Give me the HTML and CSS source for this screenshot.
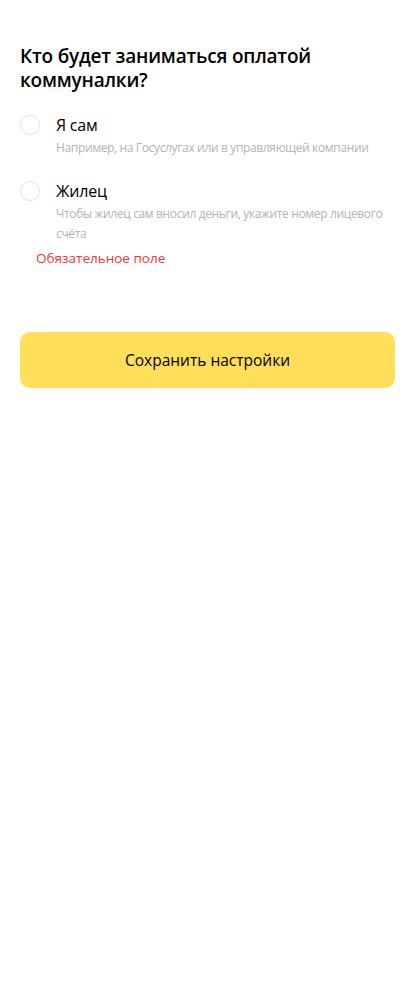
FILE: index.html
```html
<!DOCTYPE html>
<html lang="ru">
<head>
<meta charset="utf-8">
<link rel="stylesheet" href="styles.css">
</head>
<body>
<div class="page">
  <h1 class="title">Кто будет заниматься оплатой коммуналки?</h1>
  <div class="options">
    <label class="option">
      <span class="radio"></span>
      <span class="text">
        <span class="label">Я сам</span>
        <span class="hint">Например, на Госуслугах или в управляющей компании</span>
      </span>
    </label>
    <label class="option">
      <span class="radio"></span>
      <span class="text">
        <span class="label">Жилец</span>
        <span class="hint">Чтобы жилец сам вносил деньги, укажите номер лицевого счёта</span>
      </span>
    </label>
  </div>
  <div class="error">Обязательное поле</div>
  <button class="save">Сохранить настройки</button>
</div>
</body>
</html>
```
FILE: styles.css
```css
html, body {
  margin: 0;
  padding: 0;
  background: #fff;
}
body {
  font-family: "Open Sans", "Noto Sans", sans-serif;
  color: #000;
}
.page {
  padding: 44px 20px 0 20px;
  display: flex;
  flex-direction: column;
}
.title {
  margin: 0;
  font-size: 19px;
  line-height: 24px;
  font-weight: 600;
  letter-spacing: -0.2px;
}
.options {
  margin-top: 23px;
  display: flex;
  flex-direction: column;
  gap: 23px;
}
.option {
  display: flex;
  align-items: flex-start;
}
.radio {
  flex: none;
  width: 18px;
  height: 18px;
  border: 1px solid #e2e2e2;
  border-radius: 50%;
  margin-top: 0;
  margin-right: 16px;
}
.text {
  display: flex;
  flex-direction: column;
}
.label {
  font-size: 16px;
  line-height: 20px;
  letter-spacing: -0.2px;
}
.hint {
  margin-top: 3px;
  font-size: 12px;
  line-height: 20px;
  color: #b3b3b3;
  letter-spacing: -0.35px;
}
.error {
  margin-top: 4px;
  margin-left: 16px;
  font-size: 13.5px;
  line-height: 20px;
  color: #ff3333;
}
.save {
  margin-top: 64px;
  height: 56px;
  border: none;
  border-radius: 10px;
  background: #ffde5a;
  font-family: inherit;
  font-size: 15.5px;
  color: #000;
}
```
